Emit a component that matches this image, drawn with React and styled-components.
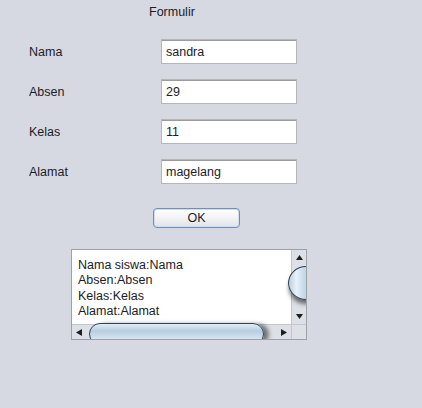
import React from "react";
import styled, { createGlobalStyle } from "styled-components";

const GlobalStyle = createGlobalStyle`
  html, body {
    margin: 0;
    padding: 0;
    background: #d6d9e1;
  }
  body {
    font-family: "Liberation Sans", Arial, sans-serif;
    font-size: 12.5px;
    color: #1c1c28;
  }
`;

const Page = styled.div`
  width: 422px;
  height: 408px;
  padding-top: 4px;
  box-sizing: border-box;
  background: #d6d9e1;
  display: flex;
  flex-direction: column;
`;

const Title = styled.div`
  margin-left: 149px;
  line-height: 16px;
`;

const Form = styled.div`
  margin-top: 19px;
  padding-left: 29px;
  display: grid;
  grid-template-columns: 132px 136px;
  grid-auto-rows: 25px;
  row-gap: 15px;
  align-items: center;
`;

const Label = styled.label`
  line-height: 16px;
`;

const Field = styled.input`
  box-sizing: border-box;
  width: 136px;
  height: 25px;
  margin: 0;
  padding: 0 4px;
  border: 1px solid #b6b6b6;
  box-shadow: inset 0 1px 0 #9c9c9c;
  background: #fff;
  font-family: "Liberation Sans", Arial, sans-serif;
  font-size: 12.5px;
  color: #1c1c28;
  outline: none;
`;

const Button = styled.button`
  margin: 24px 0 0 153px;
  width: 87px;
  height: 20px;
  box-sizing: border-box;
  padding: 0;
  border: 1px solid #6f8fb4;
  border-radius: 4px;
  background: linear-gradient(#ffffff 0%, #f2f3f5 50%, #e1e3e8 100%);
  box-shadow: inset 0 0 0 1px #d2dcea;
  font-family: "Liberation Sans", Arial, sans-serif;
  font-size: 12.5px;
  color: #1c1c28;
`;

const ScrollPane = styled.div`
  margin: 21px 0 0 71px;
  width: 236px;
  height: 91px;
  box-sizing: border-box;
  border: 1px solid #9ea2a8;
  display: grid;
  grid-template-columns: 1fr 15px;
  grid-template-rows: 1fr 15px;
  overflow: hidden;
  position: relative;
`;

const TextArea = styled.div`
  background: #fff;
  padding: 8px 0 0 6px;
  line-height: 15.3px;
  white-space: pre;
  overflow: hidden;
`;

const Track = styled.div`
  background: #dde0e6;
  position: relative;
  border-left: ${(p) => (p.$vertical ? "1px solid #c2c5cb" : "none")};
  border-top: ${(p) => (p.$vertical ? "none" : "1px solid #c2c5cb")};
  display: flex;
  flex-direction: ${(p) => (p.$vertical ? "column" : "row")};
  justify-content: space-between;
  align-items: center;
`;

const Corner = styled.div`
  background: #dde0e6;
  border-left: 1px solid #c2c5cb;
  border-top: 1px solid #c2c5cb;
`;

const Arrow = styled.svg`
  width: 15px;
  height: 15px;
  flex: none;
`;

const VThumb = styled.div`
  position: absolute;
  left: -4px;
  top: 16px;
  width: 36px;
  height: 34px;
  box-sizing: border-box;
  border-radius: 50%;
  border: 1.5px solid #2c4458;
  background: linear-gradient(90deg, #b9d0e2 0%, #e8f1f8 22%, #c4d8e8 45%, #a9c4da 100%);
  box-shadow: 0 5px 4px -1px rgba(40, 40, 40, 0.65);
`;

const HThumb = styled.div`
  position: absolute;
  left: 17px;
  top: -2px;
  width: 175px;
  height: 22px;
  box-sizing: border-box;
  border-radius: 11px;
  border: 1.5px solid #2c4458;
  background: linear-gradient(#e4edf4 0%, #b6cde0 35%, #cadcea 60%, #eef4f9 100%);
  box-shadow: 6px 0 4px -1px rgba(40, 40, 40, 0.6);
`;

const Up = () => (
  <Arrow viewBox="0 0 15 15">
    <path d="M7.5 5 L11 10 L4 10 Z" fill="#1e1e1e" />
  </Arrow>
);
const Down = () => (
  <Arrow viewBox="0 0 15 15">
    <path d="M4 5 L11 5 L7.5 10 Z" fill="#1e1e1e" />
  </Arrow>
);
const Left = () => (
  <Arrow viewBox="0 0 15 15">
    <path d="M4 7.5 L10 4 L10 11 Z" fill="#1e1e1e" />
  </Arrow>
);
const Right = () => (
  <Arrow viewBox="0 0 15 15">
    <path d="M11 7.5 L5 4 L5 11 Z" fill="#1e1e1e" />
  </Arrow>
);

const fields = [
  { label: "Nama", value: "sandra" },
  { label: "Absen", value: "29" },
  { label: "Kelas", value: "11" },
  { label: "Alamat", value: "magelang" },
];

const output = "Nama siswa:Nama\nAbsen:Absen\nKelas:Kelas\nAlamat:Alamat";

export default function App() {
  return (
    <>
      <GlobalStyle />
      <Page>
        <Title>Formulir</Title>
        <Form>
          {fields.map((f) => (
            <React.Fragment key={f.label}>
              <Label>{f.label}</Label>
              <Field readOnly value={f.value} />
            </React.Fragment>
          ))}
        </Form>
        <div>
          <Button>OK</Button>
        </div>
        <ScrollPane>
          <TextArea>{output}</TextArea>
          <Track $vertical>
            <Up />
            <Down />
            <VThumb />
          </Track>
          <Track>
            <Left />
            <Right />
            <HThumb />
          </Track>
          <Corner />
        </ScrollPane>
      </Page>
    </>
  );
}
